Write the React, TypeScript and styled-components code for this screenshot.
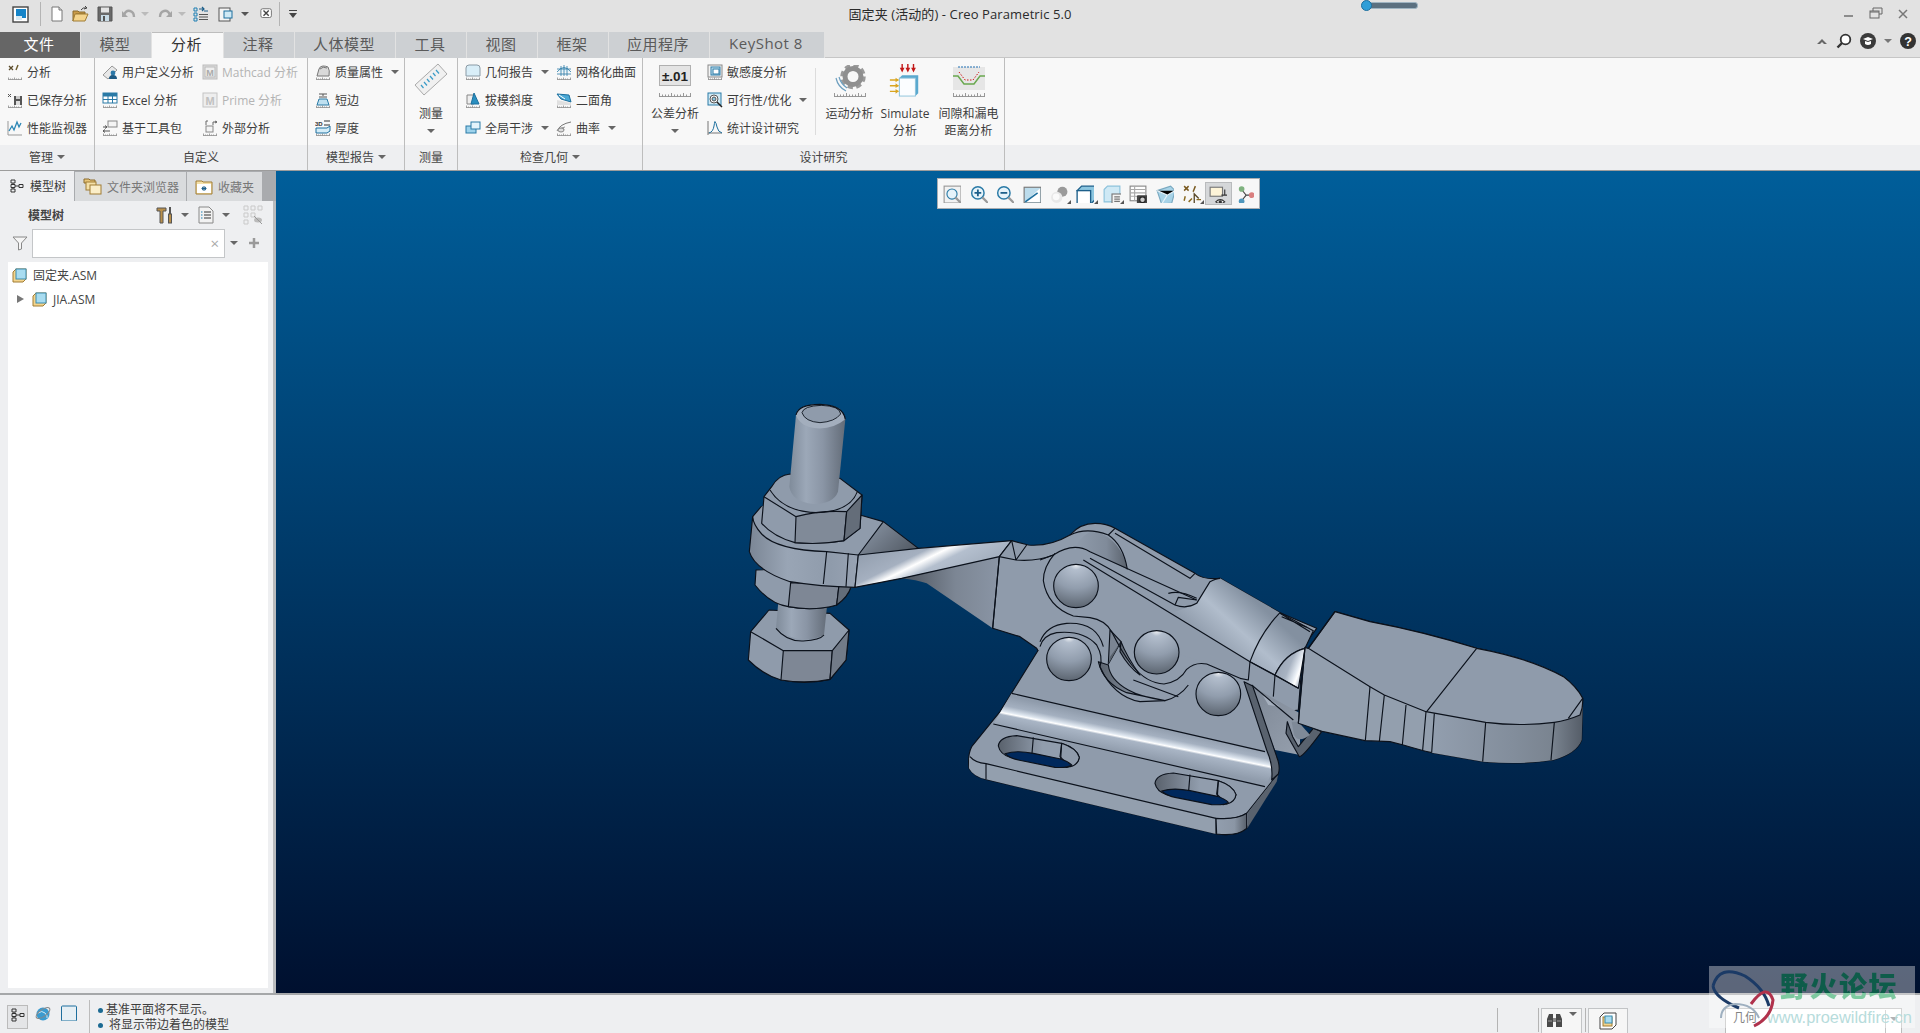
import React from "react";
import styled, { createGlobalStyle } from "styled-components";

const Global = createGlobalStyle`
  html, body { margin: 0; padding: 0; height: 100%; overflow: hidden; background: #eeeff1; }
  body { font-family: "Open Sans", "Noto Sans CJK SC", sans-serif; font-size: 12px; color: #3d3d3d; }
  #root { height: 1033px; }
`;

const Page = styled.div`
  width: 1920px; height: 1033px; display: flex; flex-direction: column; overflow: hidden; position: relative;
`;
const TitleRow = styled.div`
  height: 32px; background: #e2e2e2; display: grid; grid-template-columns: 1fr auto 1fr; align-items: center;
`;
const Quick = styled.div`display: flex; align-items: center; padding: 0 0 4px 12px; height: 32px; box-sizing: border-box;`;
const QBtn = styled.span<{ $m?: number }>`
  display: inline-flex; align-items: center; margin-left: ${p => p.$m ?? 0}px;
`;
const VSep = styled.span<{ $m?: number; $h?: number }>`
  width: 1px; height: ${p => p.$h ?? 24}px; background: #b4b4b4; margin-left: ${p => p.$m ?? 0}px; flex: none;
`;
const Caret = styled.span<{ $m?: number; $c?: string; $s?: number }>`
  display: inline-block; flex: none; width: 0; height: 0; margin-left: ${p => p.$m ?? 0}px;
  border-left: ${p => p.$s ?? 4}px solid transparent; border-right: ${p => p.$s ?? 4}px solid transparent;
  border-top: ${p => p.$s ?? 4}px solid ${p => p.$c ?? "#666"};
`;
const Title = styled.div`font-size: 13px; color: #2b2b2b; white-space: nowrap; letter-spacing: .1px; margin-bottom: 6px;`;
const TitleRight = styled.div`display: flex; align-items: center; justify-content: space-between; height: 32px; padding: 0 10px 0 290px;`;
const Zoomer = styled.div`
  width: 54px; height: 5px; border-radius: 3px; background: #5b7080; border: 1px solid #9fb4c2; position: relative; margin-top: -22px;
  &::before { content: ""; position: absolute; left: -2px; top: -3px; width: 9px; height: 9px; border-radius: 50%; background: #2f9ed8; border: 1px solid #1d6f9e; }
`;
const WinCtl = styled.div`display: flex; align-items: center; gap: 13px; margin-top: -4px;`;

const TabRow = styled.div`height: 26px; background: #e2e2e2; display: flex; align-items: stretch;`;
const Tab = styled.div<{ $w: number; $kind?: "file" | "active" }>`
  width: ${p => p.$w}px; margin-right: 1px; display: flex; align-items: center; justify-content: center; flex: none;
  font-size: 15px; letter-spacing: .5px; padding: 0 2px 4px 0;
  background: ${p => (p.$kind === "file" ? "#666666" : p.$kind === "active" ? "#f8f8f8" : "#cdd0d3")};
  color: ${p => (p.$kind === "file" ? "#fff" : p.$kind === "active" ? "#333" : "#5a5a5a")};
  border-top: ${p => (p.$kind === "active" ? "1px solid #bdbdbd" : "none")};
  box-sizing: border-box;
`;
const TabFill = styled.div`
  flex: 1; display: flex; align-items: center; justify-content: flex-end; gap: 8px; padding: 0 4px 8px 0; box-sizing: border-box;
  border-bottom: 1px solid #c6c6c6;
`;

const Ribbon = styled.div`display: flex; height: 113px; background: #f8f8f8; border-bottom: 1px solid #9c9c9c; box-sizing: border-box;`;
const Group = styled.div<{ $w?: number }>`
  ${p => (p.$w ? `width:${p.$w}px; flex:none; border-right:1px solid #bdbdbd; box-sizing:border-box;` : "flex:1;")}
  display: flex; flex-direction: column;
`;
const GroupBody = styled.div`height: 87px; display: flex; flex: none;`;
const GroupLabel = styled.div`
  flex: 1; background: #eeeff1; display: flex; align-items: center; justify-content: center; gap: 4px; font-size: 12px; color: #444; padding-bottom: 2px; box-sizing: border-box;
`;
const Col = styled.div<{ $w?: number; $p?: number }>`
  ${p => (p.$w ? `width:${p.$w}px;flex:none;` : "")} padding-left: ${p => p.$p ?? 7}px; box-sizing: border-box;
  display: grid; grid-template-rows: repeat(3, 28px);
`;
const Small = styled.div<{ $off?: boolean }>`
  display: flex; align-items: center; gap: 4px; white-space: nowrap; color: ${p => (p.$off ? "#b4b4b4" : "#3d3d3d")};
`;
const Big = styled.div<{ $w: number; $m?: number }>`
  width: ${p => p.$w}px; margin-left: ${p => p.$m ?? 0}px; flex: none; display: flex; flex-direction: column; align-items: center; padding-top: 5px;
  line-height: 17px; text-align: center; box-sizing: border-box;
`;
const BigIcon = styled.div`height: 34px; display: flex; align-items: flex-end; flex: none;`;
const BigLabel = styled.div`margin-top: 8px; white-space: nowrap;`;
const BigCaret = styled(Caret)`margin-top: 7px;`;
const RibbonSep = styled.div`width: 1px; height: 67px; background: #dcdcdc; margin-top: 10px; flex: none;`;

const Main = styled.div`display: flex; height: 822px; flex: none;`;
const Panel = styled.div`
  width: 276px; flex: none; display: flex; flex-direction: column; background: #eeeff1; border-right: 3px solid #b9bbbd; box-sizing: border-box;
`;
const PTabs = styled.div`display: flex; height: 30px; background: #a9abae; align-items: flex-end; margin-right: -3px; flex: none;`;
const PTab = styled.div<{ $w: number; $on?: boolean }>`
  width: ${p => p.$w}px; height: ${p => (p.$on ? 30 : 29)}px; flex: none; box-sizing: border-box;
  background: ${p => (p.$on ? "#eeeff1" : "#d9dbdd")}; color: ${p => (p.$on ? "#3a3a3a" : "#777")};
  border-right: 1px solid #a9abae; display: flex; align-items: center; padding-left: ${p => (p.$on ? 10 : 8)}px; gap: ${p => (p.$on ? 6 : 5)}px; white-space: nowrap;
`;
const PTool = styled.div`height: 27px; display: flex; align-items: center; padding-left: 28px; flex: none;`;
const PBold = styled.b`font-weight: 700; color: #444; width: 128px; font-size: 12px;`;
const PFilter = styled.div`height: 30px; display: flex; align-items: center; padding-left: 12px; flex: none;`;
const SearchBox = styled.div`
  width: 193px; height: 29px; margin-left: 4px; background: #fff; border: 1px solid #c4c6c8; box-sizing: border-box;
  display: flex; align-items: center; justify-content: flex-end; padding-right: 5px; color: #aaa; font-size: 15px;
`;
const Tree = styled.div`margin: 4px 5px 5px 8px; flex: 1; background: #fff; padding-top: 1px;`;
const TreeRow = styled.div<{ $in?: number }>`
  height: 24px; display: flex; align-items: center; gap: 6px; padding-left: ${p => p.$in ?? 4}px;
  font-size: 12px; color: #444;
`;
const Arrow = styled.span`
  width: 0; height: 0; border-top: 4.5px solid transparent; border-bottom: 4.5px solid transparent; border-left: 7px solid #777; margin-right: 2px;
`;

const Viewport = styled.div`
  flex: 1; position: relative; overflow: hidden; background: linear-gradient(180deg, #005e9a 0%, #00102f 100%);
`;
const ModelSvg = styled.svg`position: absolute; inset: 0; width: 100%; height: 100%;`;
const ViewBar = styled.div`
  position: absolute; left: 661px; top: 7px; width: 323px; height: 31px; box-sizing: border-box; background: #f7f7f7; border: 1px solid #a9adb1;
  display: flex; align-items: center; padding-left: 1px;
`;
const ViewBtn = styled.div<{ $on?: boolean }>`
  width: 26.6px; height: 23px; flex: none; display: flex; align-items: center; justify-content: center; box-sizing: border-box; position: relative;
  ${p => (p.$on ? "background:#d5d7d9;border:1px solid #b9bbbd;" : "")}
`;
const Corner = styled.i`
  position: absolute; right: 1px; bottom: 1px; width: 0; height: 0; border-left: 4px solid transparent; border-bottom: 4px solid #555;
`;

const Status = styled.div`
  height: 40px; flex: none; background: #eeeff1; border-top: 2px solid #a5a7a9; box-sizing: border-box; display: flex; position: relative; overflow: hidden;
`;
const StatusIcons = styled.div`display: flex; align-items: flex-start; padding: 10px 0 0 7px; width: 89px; box-sizing: border-box; gap: 7px;`;
const TreeToggle = styled.div`width: 21px; height: 24px; border: 1px solid #bbb; background: #e4e5e7; box-sizing: border-box; display: flex; justify-content: center; padding-top: 2px; flex: none;`;
const Msgs = styled.div`margin-top: 5px; height: 33px; border-left: 1px solid #bcbcbc; padding: 2px 0 0 8px; flex: none; width: 1408px; box-sizing: border-box;`;
const Msg = styled.div<{ $in?: number; $lh?: number }>`
  display: flex; align-items: center; gap: ${p => p.$in ?? 3}px; white-space: nowrap; line-height: ${p => p.$lh ?? 16}px; height: ${p => p.$lh ?? 16}px;
`;
const Dot = styled.i`width: 5px; height: 5px; border-radius: 50%; background: #1b6a93; flex: none;`;
const StatRight = styled.div`display: flex; align-items: flex-start; padding-top: 13px; flex: none;`;
const SBtn = styled.div<{ $w: number; $m?: number }>`
  width: ${p => p.$w}px; margin-left: ${p => p.$m ?? 0}px; height: 30px; border: 1px solid #c2c4c6; background: #f6f6f6; box-sizing: border-box;
  display: flex; align-items: flex-start; justify-content: center; padding-top: 3px; gap: 4px; flex: none;
`;
const Combo = styled.div`
  width: 177px; height: 30px; margin-left: 97px; background: #fff; border: 1px solid #bcbcbc; box-sizing: border-box; padding: 1px 0 0 7px; display: flex; justify-content: space-between; flex: none; line-height: 16px;
`;
const ComboArrow = styled.div`width: 15px; border-left: 1px solid #c4c4c4; display: flex; justify-content: center; padding-top: 7px;`;
const Watermark = styled.div`
  position: absolute; left: 1709px; top: 966px; width: 206px; height: 62px; background: rgba(255, 255, 255, .36);
  display: flex; flex-direction: column; padding: 4px 0 0 71px; box-sizing: border-box;
`;
const WmTitle = styled.div`
  font-size: 28px; font-weight: 900; line-height: 30px; letter-spacing: 1.5px; font-family: "Noto Sans CJK SC", sans-serif; white-space: nowrap;
  background: linear-gradient(180deg, #0e5c4a 0, #0e5c4a 23px, #7ec9a0 23px, #7ec9a0 30px);
  -webkit-background-clip: text; background-clip: text; color: transparent;
`;
const WmUrl = styled.div`font-size: 16.4px; line-height: 20px; color: #b7dcdc; margin: 7px 0 0 -13px; font-family: "Liberation Sans", sans-serif; white-space: nowrap;`;
const WmLogo = styled.svg`position: absolute; left: 0; top: 2px; width: 72px; height: 60px;`;

const Ico = styled.svg<{ $s?: number }>`
  width: ${p => p.$s ?? 16}px; height: ${p => p.$s ?? 16}px; flex: none; display: block;
`;
const I: React.FC<{ s?: number; v?: number; children: React.ReactNode }> = ({ s = 16, v = 16, children }) => (
  <Ico $s={s} viewBox={`0 0 ${v} ${v}`}>{children}</Ico>
);
const Ruler = () => (
  <path d="M1 15.5h14M1.5 13.5v2M3.5 14.5v1M5.5 14.5v1M7.5 13.5v2M9.5 14.5v1M11.5 14.5v1M14.5 13.5v2" stroke="#8c8c8c" strokeWidth=".8" fill="none" />
);

const ic = {
  analysis: <I><path d="M2 2l4 4M6 2L2 6" stroke="#5a4a2a" strokeWidth="1.3" /><path d="M11 1l-2 5" stroke="#6b5a2c" strokeWidth="1.4" /><Ruler /></I>,
  saved: <I><path d="M1 2l3 3M4 2L1 5" stroke="#555" /><rect x="7" y="4" width="8" height="9" fill="#555" /><rect x="9" y="9" width="4" height="4" fill="#ddd" /><rect x="9" y="4" width="4" height="3" fill="#ccc" /><Ruler /></I>,
  monitor: <I><path d="M1 1v14h14" stroke="#999" fill="none" /><path d="M2 11l3-5 2 4 3-8 2 5 2-4" stroke="#2a86b5" strokeWidth="1.3" fill="none" /></I>,
  user: <I><path d="M1 11L10 2l5 4-9 9z" fill="#e8e8e8" stroke="#999" /><circle cx="11" cy="9" r="2.4" fill="#2b78a8" /><path d="M7 15q0-4 4-4t4 4z" fill="#1d5a84" /></I>,
  excel: <I><rect x="1" y="1" width="14" height="10" fill="#fff" stroke="#2a7aa6" /><path d="M1 4h14M1 7.5h14M6 4v7M10.5 4v7" stroke="#2a7aa6" /><rect x="1" y="1" width="14" height="3" fill="#2a7aa6" /><Ruler /></I>,
  mathcad: <I><rect x="1" y="1" width="14" height="14" fill="#ddd" stroke="#bbb" /><rect x="3" y="3" width="10" height="10" fill="#eee" stroke="#bbb" /><text x="8" y="12" fontSize="9" fontWeight="700" textAnchor="middle" fill="#aaa" fontFamily="Liberation Sans">M</text></I>,
  prime: <I><rect x="1" y="1" width="14" height="14" fill="#eee" stroke="#c4c4c4" /><text x="8" y="12.5" fontSize="11" fontWeight="700" textAnchor="middle" fill="#c0c0c0" fontFamily="Liberation Sans">M</text></I>,
  toolkit: <I><rect x="6" y="1" width="9" height="6" fill="#f4f4f4" stroke="#888" /><path d="M1 7h4M3 5.5L5 7 3 8.500M1 11h7M3 9.500L1 11l2 1.500" stroke="#555" fill="none" /><Ruler /></I>,
  external: <I><rect x="4" y="6" width="7" height="6" fill="#f4f4f4" stroke="#888" /><path d="M4 5V1h2M11 5V2h4M13 1l2 1-2 1" stroke="#666" fill="none" /><Ruler /></I>,
  mass: <I><path d="M2 12l2-7q1-3 4-3 3 0 5 1 2 3 1 9z" fill="#d9d9d9" stroke="#777" /><path d="M5 5q3-3 7-1" stroke="#777" fill="none" /><Ruler /></I>,
  edge: <I><path d="M4 2h8M8 2v2M4 5h8" stroke="#555" /><path d="M4 7h8l2 6H2z" fill="#bfe0f0" stroke="#2a7aa6" /><Ruler /></I>,
  thick: <I><text x="0" y="6" fontSize="6" fontWeight="700" fill="#333" fontFamily="Liberation Sans">3D</text><path d="M9 1h6M9 5h6" stroke="#333" /><path d="M1 8h11l3-2v5l-3 2H1z" fill="#d4ecf7" stroke="#1d6f9e" /><Ruler /></I>,
  geom: <I><path d="M1 12V4q0-3 3-3h8q3 0 3 3v8z" fill="#d9eef8" stroke="#8a9aa5" /><Ruler /></I>,
  draft: <I><path d="M2 3h7v9H2z" fill="#eee" stroke="#888" /><path d="M9 1l5 11H6z" fill="#2a8fc0" stroke="#1d6f9e" /><Ruler /></I>,
  clash: <I><rect x="1" y="6" width="10" height="7" fill="#9ed3ec" stroke="#2a7aa6" /><rect x="6" y="2" width="9" height="7" fill="#e3f3fb" stroke="#2a7aa6" /></I>,
  mesh: <I><path d="M1 8q7-9 14 0M1 5h14M1 10h14M5 2v10M8 1v11M11 2v10" stroke="#2a7aa6" fill="#e6f4fb" strokeWidth=".8" /><Ruler /></I>,
  dihedral: <I><path d="M1 2l12 1 2 7L5 7z" fill="#4aa9d6" stroke="#1d6f9e" /><path d="M3 3l6 4" stroke="#fff" /><path d="M1 8l14 3v2H1z" fill="#e0e0e0" /><Ruler /></I>,
  curv: <I><path d="M1 11q3-7 14-9" stroke="#777" fill="none" /><path d="M1 11q2-3 8-4M4 8l2 3M7 7l1 3" stroke="#999" fill="none" /><ellipse cx="5" cy="10" rx="3" ry="2" fill="#ddd" stroke="#888" /><Ruler /></I>,
  sens: <I><rect x="1" y="1" width="14" height="12" fill="#f4f4f4" stroke="#888" /><rect x="4" y="3" width="9" height="8" fill="#cfe9f5" stroke="#2a7aa6" /><rect x="6" y="5" width="6" height="5" fill="#fff" stroke="#2a7aa6" /><Ruler /></I>,
  feas: <I><rect x="1" y="1" width="13" height="12" fill="#cfe9f5" stroke="#2a7aa6" /><circle cx="7" cy="7" r="4" fill="#fff" stroke="#555" /><circle cx="7" cy="7" r="2" fill="#88c5e0" stroke="#555" /><path d="M10 10l5 5" stroke="#222" strokeWidth="1.5" /></I>,
  stat: <I><path d="M1 1v14M1 13h14" stroke="#777" /><path d="M2 13Q6 12 7 6t1-4q1 0 2 5t5 6" stroke="#1d6f9e" fill="none" /></I>,
};

const RulerBig = () => (
  <path d="M0 31.500h32M.5 28v3.500M3.500 29.500v2M6.500 29.500v2M9.500 29.500v2M12.500 28v3.500M15.500 29.500v2M18.500 29.500v2M21.500 29.500v2M24.500 28v3.500M27.500 29.500v2M31.500 28v3.500" stroke="#8c8c8c" strokeWidth=".9" fill="none" />
);
const bigs = {
  measure: (
    <I s={34} v={34}>
      <path d="M1 22L24 1l9 10L10 32z" fill="#f0f0f0" stroke="#aaa" />
      <path d="M7 22l2.500 3M10 19l3 3.500M13 16l2.500 3M16 13l3 3.500M19 10l2.500 3M22 7l3 3.500" stroke="#3a9cc8" strokeWidth="1.2" />
    </I>
  ),
  tol: (
    <I s={32} v={32}>
      <rect x=".5" y=".5" width="31" height="20" fill="#e4e4e4" stroke="#b0b0b0" />
      <text x="16" y="15.500" fontSize="13.500" fontWeight="700" textAnchor="middle" fill="#222" fontFamily="Liberation Sans">±.01</text>
      <RulerBig />
    </I>
  ),
  motion: (
    <I s={32} v={32}>
      <circle cx="19" cy="11.500" r="10.500" fill="none" stroke="#9a9a9a" strokeWidth="4.500" strokeDasharray="5 3.250" />
      <circle cx="19" cy="11.500" r="8" fill="none" stroke="#8f8f8f" strokeWidth="5" />
      <path d="M2 13q2 9 10 13M5 12q2 7 8 11" stroke="#6d9fbf" strokeWidth="1.2" fill="none" />
      <RulerBig />
    </I>
  ),
  sim: (
    <I s={34} v={36}>
      <path d="M15 6V1M21 6V1M27 6V1" stroke="#c21818" strokeWidth="1.5" />
      <path d="M12.500 5l2.500 5 2.500-5zM18.500 5l2.500 5 2.500-5zM24.500 5l2.500 5 2.500-5z" fill="#c21818" />
      <path d="M12 16l3-3h17v19l-3 3H12z" fill="#5aa9cf" />
      <rect x="12" y="16" width="17" height="19" fill="#fbfdff" stroke="#8cc2dc" />
      <path d="M2 18h9M2 24h9M2 30h9" stroke="#d9a520" strokeWidth="1.500" />
      <path d="M8 15.500l3.500 2.500-3.500 2.500zM8 21.500l3.500 2.500-3.500 2.500zM8 27.500l3.500 2.500-3.500 2.500z" fill="#d9a520" />
    </I>
  ),
  clear: (
    <I s={32} v={32}>
      <rect y="2" width="32" height="23" fill="#e6e6e6" />
      <path d="M0 11h5l6 8h10l6-8h5" stroke="#6aa84f" strokeWidth="1.500" fill="none" />
      <path d="M5 2h22" stroke="#1f6fb2" strokeDasharray="2 1" />
      <path d="M6 7l6 8h8l6-8" stroke="#d01818" strokeDasharray="1.500 1.500" fill="none" />
      <RulerBig />
    </I>
  ),
};

const V = 18;
const viewIcons = [
  <I s={V}><rect x="1" y="1" width="15" height="15" fill="#f2f2f2" stroke="#999" /><circle cx="8" cy="8" r="4.500" fill="#e6f3fa" stroke="#2a7aa6" /><path d="M11 11l5 5" stroke="#999" strokeWidth="2" /></I>,
  <I s={V}><circle cx="7" cy="7" r="5.500" fill="#e6f3fa" stroke="#2a7aa6" strokeWidth="1.300" /><path d="M4 7h6M7 4v6" stroke="#1d5f8a" strokeWidth="1.600" /><path d="M11 11l5 5" stroke="#999" strokeWidth="2" /></I>,
  <I s={V}><circle cx="7" cy="7" r="5.500" fill="#e6f3fa" stroke="#2a7aa6" strokeWidth="1.300" /><path d="M4 7h6" stroke="#1d5f8a" strokeWidth="1.600" /><path d="M11 11l5 5" stroke="#999" strokeWidth="2" /></I>,
  <I s={V}><rect x="1" y="2" width="15" height="14" fill="#bcdcec" stroke="#777" /><path d="M2 15L15 3v12z" fill="#fff" /><path d="M2 15l11-8" stroke="#1d6f9e" strokeWidth="1.500" /></I>,
  <I s={V}><circle cx="11" cy="6" r="4.500" fill="#9a9a9a" /><circle cx="6" cy="11" r="5" fill="#e8e8e8" /><circle cx="5.500" cy="10.500" r="3" fill="#fafafa" /></I>,
  <I s={V}><path d="M1 5l4-4h12v12l-4 4z" fill="#8cc6e0" stroke="#1d5f8a" strokeWidth="1.200" /><rect x="1" y="5" width="12" height="12" fill="#fff" stroke="#1d5f8a" strokeWidth="1.200" /></I>,
  <I s={V}><path d="M1 4l3-3h11v11l-3 3H1z" fill="#cfe9f5" stroke="#8cc2dc" /><rect x="8" y="8" width="9" height="9" fill="#f4f4f4" stroke="#777" /><path d="M10 10.500h5M10 12.500h5M10 14.500h5" stroke="#777" /></I>,
  <I s={V}><rect x="1" y="1" width="14" height="13" fill="#fff" stroke="#888" /><path d="M1 4h14M1 7h14M1 10h14M5 1v13" stroke="#aaa" /><rect x="7" y="9" width="10" height="8" rx="1" fill="#444" /><circle cx="12" cy="13" r="2.500" fill="#ccc" stroke="#222" /></I>,
  <I s={V}><path d="M1 5l12-4 4 4-3 11-9 1z" fill="#a7d3e8" stroke="#7aa9c0" /><path d="M1 5l9 4 7-4M10 9l-5 8" stroke="#e4f2f9" /></I>,
  <I s={V}><path d="M1 1l4 4M5 1L1 5" stroke="#7a5a20" strokeWidth="1.300" /><path d="M11 1l-2 5" stroke="#7a5a20" strokeWidth="1.300" /><path d="M10 16V8l4 4" stroke="#5a4a2a" fill="none" strokeWidth="1.200" /><path d="M5 15l3-3M2 10l-1 4M12 13h5" stroke="#8a6a20" strokeWidth="1.300" /></I>,
  <I s={V}><rect x="1" y="2" width="11" height="8" fill="#fdf4d8" stroke="#777" /><path d="M14 4v5M11 9h6" stroke="#333" /><path d="M6 15q4-4 8 0q-4 3-8 0z" fill="#fff" stroke="#333" /><circle cx="10" cy="15" r="1.500" fill="#333" /></I>,
  <I s={V}><path d="M5 4l4 5-4 5M9 9h5" stroke="#444" fill="none" /><circle cx="5" cy="3.500" r="2.500" fill="#7fb27f" /><circle cx="14" cy="9" r="2.500" fill="#d97f7f" /><circle cx="5" cy="14.500" r="2.500" fill="#4f97bd" /></I>,
];

const Smalls: React.FC<{ items: [React.ReactNode, string, boolean?, boolean?][] ; p?: number; w?: number}> = ({ items, p, w }) => (
  <Col $p={p} $w={w}>
    {items.map(([icon, text, caret, off]) => (
      <Small key={text} $off={off}>
        {icon}
        <span>{text}</span>
        {caret ? <Caret $m={4} /> : null}
      </Small>
    ))}
  </Col>
);

const tabs: [string, number, ("file" | "active")?][] = [
  ["文件", 80, "file"], ["模型", 70], ["分析", 71, "active"], ["注释", 70], ["人体模型", 100], ["工具", 70], ["视图", 70], ["框架", 70], ["应用程序", 100], ["KeyShot 8", 114],
];

const E = "#0b111b";
const M = "#8f9bab";
const W = 3.4;

const Boss: React.FC<{ cx: number; cy: number }> = ({ cx, cy }) => (
  <ellipse cx={cx} cy={cy} rx={67} ry={65} fill="url(#boss)" stroke={E} strokeWidth={W} />
);
const Slot: React.FC<{ dx?: number; dy?: number }> = ({ dx = 0, dy = 0 }) => (
  <g transform={`translate(${dx},${dy})`}>
    <path d="M170,257 Q118,260 115,288 Q120,312 150,322 L320,352 Q355,345 358,322 Q350,295 305,280Z" fill="url(#slotWall)" stroke={E} strokeWidth={W} />
    <path d="M305,280 Q350,295 358,322 Q355,345 330,350 L300,320Z" fill={M} stroke={E} strokeWidth={W} />
    <path d="M135,311 Q170,300 220,310 L302,327 Q325,335 335,345 Q325,354 285,352 L175,330 Q150,325 135,311Z" fill="#00285c" />
    <path d="M220,262 L216,310M305,280 L302,328" stroke={E} strokeWidth={W} fill="none" />
  </g>
);

const Model = () => (
  <ModelSvg viewBox="276 171 1644 822">
    <defs>
      <linearGradient id="cyl" x1="0" x2="1" y1="0" y2="0">
        <stop offset="0" stopColor="#7f8b9a" /><stop offset=".3" stopColor="#9ca8b8" /><stop offset=".6" stopColor="#8a95a5" /><stop offset="1" stopColor="#636c78" />
      </linearGradient>
      <linearGradient id="collar" x1="0" x2="1" y1="0" y2="0">
        <stop offset="0" stopColor="#7b8695" /><stop offset=".35" stopColor="#99a5b5" /><stop offset=".75" stopColor="#8f9bab" /><stop offset="1" stopColor="#98a3b3" />
      </linearGradient>
      <linearGradient id="twist" x1="0" x2="1" y1=".2" y2=".8">
        <stop offset="0" stopColor="#8f9bab" /><stop offset=".33" stopColor="#a5b0c0" /><stop offset=".42" stopColor="#ffffff" /><stop offset=".52" stopColor="#b4bfce" /><stop offset="1" stopColor="#8f9bab" />
      </linearGradient>
      <linearGradient id="under" x1="0" x2="1" y1="0" y2="0">
        <stop offset="0" stopColor="#4c535d" /><stop offset=".55" stopColor="#7c8694" /><stop offset="1" stopColor="#8a95a5" />
      </linearGradient>
      <linearGradient id="wedge" x1="0" x2="1" y1="0" y2=".6">
        <stop offset="0" stopColor="#8f9bab" /><stop offset="1" stopColor="#565e69" />
      </linearGradient>
      <linearGradient id="dome" x1="0" x2="1" y1="0" y2="0">
        <stop offset="0" stopColor="#8f9bab" /><stop offset=".6" stopColor="#808b9a" /><stop offset="1" stopColor="#59616c" />
      </linearGradient>
      <radialGradient id="boss" cx=".5" cy="-.02" r="1.05">
        <stop offset="0" stopColor="#ffffff" /><stop offset=".14" stopColor="#b3becd" /><stop offset=".55" stopColor="#919dad" /><stop offset="1" stopColor="#59626d" />
      </radialGradient>
      <linearGradient id="lever" gradientUnits="userSpaceOnUse" x1="630" y1="258" x2="500" y2="400">
        <stop offset="0" stopColor="#8390a0" /><stop offset=".5" stopColor="#b1bdcc" /><stop offset="1" stopColor="#8f9bab" />
      </linearGradient>
      <linearGradient id="sheen" gradientUnits="userSpaceOnUse" x1="700" y1="430" x2="800" y2="470">
        <stop offset="0" stopColor="#8f9bab" /><stop offset=".55" stopColor="#a8b3c2" /><stop offset=".78" stopColor="#e6ecf3" /><stop offset=".86" stopColor="#ffffff" /><stop offset="1" stopColor="#b0bbca" />
      </linearGradient>
      <linearGradient id="bend" gradientUnits="userSpaceOnUse" x1="510" y1="212" x2="490" y2="311">
        <stop offset="0" stopColor="#8f9bab" /><stop offset=".3" stopColor="#a4b0c0" /><stop offset=".47" stopColor="#dfe7f0" /><stop offset=".52" stopColor="#ffffff" /><stop offset=".58" stopColor="#a9b5c5" /><stop offset="1" stopColor="#8f9bab" />
      </linearGradient>
      <linearGradient id="slotWall" x1="0" x2=".55" y1="0" y2="0">
        <stop offset="0" stopColor="#59616c" /><stop offset="1" stopColor="#919dad" />
      </linearGradient>
      <linearGradient id="corner" x1="0" x2="1" y1="0" y2="0">
        <stop offset="0" stopColor="#929eae" /><stop offset=".6" stopColor="#8b96a5" /><stop offset="1" stopColor="#59616c" />
      </linearGradient>
      <linearGradient id="hSide" gradientUnits="userSpaceOnUse" x1="430" y1="0" x2="875" y2="0">
        <stop offset="0" stopColor="#929eae" /><stop offset=".55" stopColor="#828d9b" /><stop offset=".8" stopColor="#7a8490" /><stop offset="1" stopColor="#565e69" />
      </linearGradient>
      <linearGradient id="rear" x1="0" x2="1" y1="0" y2="1">
        <stop offset="0" stopColor="#7c8694" /><stop offset="1" stopColor="#959fad" />
      </linearGradient>
      <linearGradient id="groove" x1="0" x2="1" y1="0" y2="0">
        <stop offset="0" stopColor="#5a626d" /><stop offset=".5" stopColor="#7d8795" /><stop offset="1" stopColor="#a3aebd" />
      </linearGradient>
    </defs>

    <g transform="translate(720,380) scale(.33333)" stroke={E} strokeWidth={W} strokeLinejoin="round">
      <path fill={M} d="M147,690 L92,755 L85,840 Q130,885 183,900 Q260,915 330,898 L378,840 L387,750 L330,700Z" />
      <path fill="#7e8795" d="M190,812 L337,812 L330,898 Q260,912 183,900Z" />
      <path fill="#727b88" d="M337,812 L387,750 L378,840 L330,898Z" />
      <path fill="none" d="M92,755 L190,812" />
      <path fill="url(#cyl)" stroke="none" d="M175,665 L168,745 Q240,800 312,765 L322,670Z" />
      <path fill="none" d="M168,745 Q200,785 250,783 Q300,780 312,765" />
      <path fill={M} d="M108,570 L105,615 Q150,672 205,680 Q280,695 350,675 Q385,650 393,620 L380,560Z" />
      <path fill="#7e8795" d="M212,608 L205,680 Q280,695 350,675 L357,615Z" />
      <path fill="#646d79" d="M357,615 L393,620 Q385,650 350,675Z" />
      <path fill="url(#under)" stroke="none" d="M545,595 L838,530 L818,745 L620,610 Q590,600 545,595Z" />
      <path fill={M} stroke="none" d="M125,378 L98,410 L96,450 Q120,510 320,530 L415,530 L490,425 L420,405 L300,380Z" />
      <path fill="url(#wedge)" stroke="none" d="M490,425 L595,505 L415,525Z" />
      <path fill="none" d="M420,405 L490,425 L595,505M490,425 L415,525" />
      <path fill="url(#collar)" d="M98,410 L88,515 Q105,570 210,605 Q300,620 405,622 L415,525 L320,515 Q170,510 125,462 Q100,435 98,410Z" />
      <path fill="none" d="M125,378 L98,410M320,515 L310,612M385,520 L378,620" />
      <path fill={M} d="M132,350 L155,320 Q175,285 210,282 L360,295 L426,345 L420,445 L372,482 Q300,495 225,488 Q160,470 125,430Z" />
      <path fill="#808a98" d="M228,410 Q300,390 380,395 L372,482 Q300,495 225,488Z" />
      <path fill="#646d79" d="M380,395 L426,345 L420,445 L372,482Z" />
      <path fill="none" d="M132,350 L228,410 M150,330 Q190,395 290,398 Q390,395 412,335" />
      <path fill="url(#cyl)" stroke="none" d="M228,105 Q235,73 300,73 Q370,75 376,118 L354,335 Q340,372 280,372 Q215,365 208,320Z" />
      <path fill="#a3aebd" d="M228,105 Q235,73 300,73 Q370,75 376,118 Q340,148 290,145 Q240,140 228,105Z" stroke="none" />
      <path fill="#8f9bab" strokeWidth="2.600" d="M246,98 Q250,78 304,76 Q360,78 362,102 Q345,125 300,128 Q255,125 246,98Z" />
      <path fill="none" d="M228,105 Q235,73 300,73 Q370,75 376,118" />
      <path fill="url(#twist)" d="M415,525 L595,505 L875,482 L838,530 L545,595 L405,622Z" />
    </g>

    <g transform="translate(1040,510) scale(.33333)" stroke={E} strokeWidth={W} strokeLinejoin="round">
      <path fill={M} d="M-142,355 L-122,140 L-85,92 L-35,105 Q30,110 90,75 Q120,40 165,40 Q200,40 225,55 L465,190 Q490,210 540,205 L720,308 L830,355 L790,410 L775,600 L500,640 L100,620 L-10,415 L-60,380Z" />
      <path fill="none" d="M-122,140 L-142,355M-122,140 L-72,150 Q-10,155 40,135M-85,92 L-72,150M-40,105 L-72,150" />
      <path fill="url(#dome)" stroke="none" d="M165,62 Q245,90 262,178 L150,125 Q130,105 105,112 Q125,70 165,62Z" />
      <path fill="url(#lever)" stroke="none" d="M540,205 L720,308 Q660,370 630,455 L390,310 Q440,295 470,280 L510,215Z" />
      <path fill="url(#lever)" d="M720,308 L820,362 L795,415 Q735,430 705,495 L630,455 Q660,370 720,308Z" />
      <path fill="url(#sheen)" d="M795,415 Q735,430 705,495 L775,535Z" />
    </g>

    <g transform="translate(960,650) scale(.33333)" stroke={E} strokeWidth={W} strokeLinejoin="round">
      <path fill="url(#rear)" stroke="none" d="M860,100 L1020,190 L1020,315 L945,300Z" />
      <path fill="#a5afbd" stroke="none" d="M905,130 L960,170 L925,165Z" />
      <path fill="none" d="M875,105 L1000,210" />
    </g>
    <g transform="translate(1290,590) scale(.33333)" stroke={E} strokeWidth={W} strokeLinejoin="round">
      <path fill="#59626e" d="M-8,395 L-12,430 L28,500 Q40,500 95,425 L70,415 L25,470 L8,440Z" />
      <path fill="#7f8a98" stroke="none" d="M5,395 L12,435 Q25,460 60,435 L25,395Z" />
    </g>

    <g transform="translate(960,650) scale(.33333)" stroke={E} strokeWidth={W} strokeLinejoin="round">
      <path fill={M} d="M235,0 L120,185 L35,290 Q22,315 27,355 Q40,380 78,388 L770,552 Q830,560 860,535 L955,370 Q955,340 930,290 L860,110 L830,70 L500,-40 L300,-40Z" stroke="none" />
      <path fill="none" d="M235,0 L120,185 L35,290 Q22,315 27,355 Q40,380 78,388 L770,552 Q830,560 860,535 L955,370" />
      <path fill="url(#bend)" stroke="none" d="M155,130 L915,305 L945,350 L915,410 L100,222Z" />
      <path fill="none" d="M155,130 L915,305M100,222 L915,410" />
      <path fill="#939fae" stroke="none" d="M27,322 Q45,340 78,342 L768,505 L768,552 L78,388 Q40,380 27,355Z" />
      <path fill="none" d="M30,320 Q45,338 78,341 L768,505 Q830,510 860,490 L955,370M78,341 V388M768,505 V552" />
      <path fill="url(#corner)" d="M768,505 Q830,510 860,490 L860,535 Q830,560 770,552Z" />
      <path fill="#59626e" d="M862,490 L955,372 L950,395 L862,535Z" stroke="none" />
      <Slot />
      <Slot dx={470} dy={112} />
      <path fill="#59626e" d="M852,95 L878,108 L950,320 Q962,350 955,372 L935,390 Q940,345 920,300Z" />
    </g>

    <g transform="translate(1040,510) scale(.33333)" stroke={E} strokeWidth={W} strokeLinejoin="round" fill="none">
      <path fill="#7b8593" d="M210,360 L243,395 L205,462Z" />
      <path fill="#59626d" stroke="none" d="M205,462 L243,395 L210,440Z" />
      <path fill="url(#groove)" d="M175,455 Q190,520 260,548 L375,572 Q300,560 265,540 Q210,510 205,465Z" />
      <path fill="url(#groove)" d="M243,395 Q260,440 300,495 Q265,470 240,425Z" />
      <path d="M45,130 Q10,170 10,212 Q22,290 100,318 L150,323 Q195,330 215,365 Q245,425 275,465 Q320,520 372,522 Q420,515 440,478 Q465,455 500,462 L600,505" />
      <path d="M0,410 Q10,375 50,368 Q130,360 170,405 Q190,440 180,470 Q220,560 300,575 L375,572 Q420,560 445,525" />
      <path d="M0,395 Q20,345 80,340 Q170,335 190,410" />
      <path d="M130,150 L630,455 L775,535" />
      <path d="M0,150 L40,135 Q100,95 150,125 L470,270" />
      <path d="M150,145 L405,285 Q440,298 470,280 L510,215 Q530,205 540,205" />
      <path d="M405,285 L415,262 L470,270M385,250 Q420,240 470,265" />
      <path d="M225,70 L450,205 L465,190M90,75 Q140,50 205,75 L225,55" />
      <path d="M205,75 Q250,105 262,178" />
      <path d="M630,455 L625,510 L600,505M705,495 L700,560M720,310 L810,365M725,320 L800,352" />
      <path d="M280,510 L415,560" />
      <Boss cx={108} cy={228} />
      <Boss cx={87} cy={447} />
      <Boss cx={350} cy={427} />
      <Boss cx={535} cy={552} />
    </g>

    <g transform="translate(1290,590) scale(.33333)" stroke={E} strokeWidth={W} strokeLinejoin="round">
      <path fill="#939fae" d="M135,65 L240,95 Q400,125 560,175 Q720,205 820,260 Q860,290 878,325 L875,450 Q860,490 790,510 Q700,525 580,515 L425,488 Q390,480 340,465 L300,455 L225,452 L100,425 L25,400 L45,172 L55,175Z" />
      <path fill="url(#hSide)" stroke="none" d="M433,370 L587,397 Q700,410 835,385 L878,350 L875,450 Q860,490 790,510 Q700,525 580,515 L425,488Z" />
      <path fill={M} d="M55,175 L135,65 L240,95 Q400,125 560,175 Q720,205 820,260 Q860,290 878,325 Q880,350 870,375 Q830,392 793,397 Q690,410 587,397 L408,365 L283,315 L240,290Z" />
      <path fill="none" d="M135,65 L55,175M560,175 L410,365M878,325 L835,385M240,290 L226,452M283,315 L268,455M348,345 L337,465M408,365 L398,480M433,370 L425,488M587,397 L578,515M793,397 L783,510M45,172 L33,300 L25,400" />
    </g>
  </ModelSvg>
);

export default function App() {
  return (
    <>
      <Global />
      <Page>
        <TitleRow>
          <Quick>
            <I s={17} v={17}><rect x="1" y="1" width="15" height="15" fill="#fff" stroke="#444" strokeWidth="1.400" /><rect x="4" y="3" width="10" height="9" fill="#1584c8" /><rect x="4" y="10" width="6" height="4" fill="#d6e8f2" /></I>
            <VSep $m={11} />
            <QBtn $m={8}><I s={16}><path d="M3 1h7l3 3v11H3z" fill="#fff" stroke="#777" /><path d="M10 1v3h3" fill="#ddd" stroke="#777" /></I></QBtn>
            <QBtn $m={7}><I s={17} v={17}><path d="M1 5h5l1 1h6v2H4l-3 7z" fill="#c99b4a" stroke="#8a6a2c" /><path d="M3 8h13l-3 7H1z" fill="#f4d48c" stroke="#a07c34" /><path d="M9 4q2-3 5-2M13 0l2 2-3 1" stroke="#444" fill="none" /></I></QBtn>
            <QBtn $m={8}><I s={16}><path d="M1 1h14v14H1z" fill="#6a6a6a" stroke="#555" /><rect x="4" y="1.500" width="8" height="5" fill="#e4e4e4" /><rect x="4" y="9" width="8" height="6" fill="#c8dbe6" /><rect x="6" y="10" width="2" height="5" fill="#555" /></I></QBtn>
            <QBtn $m={8}><I s={16}><path d="M3 9q2-5 6-4t4 6" stroke="#a5a5a5" strokeWidth="2.400" fill="none" /><path d="M1 5v6h6z" fill="#a5a5a5" /></I></QBtn>
            <Caret $m={4} $c="#bbb" />
            <QBtn $m={8}><I s={16}><path d="M13 9q-2-5-6-4t-4 6" stroke="#a5a5a5" strokeWidth="2.400" fill="none" /><path d="M15 5v6H9z" fill="#a5a5a5" /></I></QBtn>
            <Caret $m={5} $c="#bbb" />
            <QBtn $m={7}><I s={16}><path d="M1 2h3v3H1zM1 7h3v3H1zM1 12h3v3H1z" fill="none" stroke="#1d7fb3" /><path d="M6 8.500h9M6 11h9M6 13.500h9" stroke="#555" /><path d="M6 3h5M9 1l2 2-2 2" stroke="#1d5f8a" fill="none" strokeWidth="1.200" /><path d="M15 5h-4" stroke="#1d5f8a" /></I></QBtn>
            <QBtn $m={9}><I s={17} v={17}><rect x="1" y="2" width="11" height="13" fill="#f4f4f4" stroke="#555" /><rect x="6" y="5" width="8" height="7" fill="#cfe9f5" stroke="#1d6f9e" /></I></QBtn>
            <Caret $m={6} $c="#555" />
            <QBtn $m={11}><I s={14}><rect x="1" y="2" width="12" height="10" rx="2" fill="#fff" stroke="#666" /><path d="M4 4l6 6M10 4l-6 6" stroke="#444" strokeWidth="1.600" /></I></QBtn>
            <VSep $m={5} />
            <QBtn $m={8}><I s={10} v={10}><path d="M1 1h8v1H1z" fill="#444" /><path d="M1 4h8L5 9z" fill="#444" /></I></QBtn>
          </Quick>
          <Title>固定夹 (活动的) - Creo Parametric 5.0</Title>
          <TitleRight>
            <Zoomer />
            <WinCtl>
              <I s={14} v={14}><path d="M2 9h9" stroke="#777" strokeWidth="1.600" /></I>
              <I s={14} v={14}><path d="M4 4V1h9v6h-3" stroke="#666" fill="none" /><rect x="1" y="4" width="9" height="7" fill="none" stroke="#666" /><path d="M1 5h9" stroke="#666" /></I>
              <I s={14} v={14}><path d="M3 3l8 8M11 3l-8 8" stroke="#777" strokeWidth="1.500" /></I>
            </WinCtl>
          </TitleRight>
        </TitleRow>

        <TabRow>
          {tabs.map(([t, w, k]) => <Tab key={t} $w={w} $kind={k}>{t}</Tab>)}
          <TabFill>
            <I s={12} v={12}><path d="M1 9l5-5 5 5H8L6 7 4 9z" fill="#666" /></I>
            <I s={16}><circle cx="9.500" cy="6.500" r="4.800" fill="#fff" stroke="#333" strokeWidth="1.800" /><path d="M6 10l-4.500 4.500" stroke="#333" strokeWidth="2.400" /></I>
            <I s={16}><circle cx="8" cy="8" r="8" fill="#3b3b3b" /><path d="M3 6l5-2 5 2-5 2z" fill="#fff" /><path d="M5 8v3q3 2 6 0V8l-3 1z" fill="#fff" /></I>
            <Caret $c="#777" />
            <I s={16}><circle cx="8" cy="8" r="8" fill="#333" /><text x="8" y="12.500" fontSize="12.500" fontWeight="700" textAnchor="middle" fill="#fff" fontFamily="Liberation Sans">?</text></I>
          </TabFill>
        </TabRow>

        <Ribbon>
          <Group $w={95}>
            <GroupBody>
              <Smalls items={[[ic.analysis, "分析"], [ic.saved, "已保存分析"], [ic.monitor, "性能监视器"]]} />
            </GroupBody>
            <GroupLabel>管理<Caret /></GroupLabel>
          </Group>
          <Group $w={213}>
            <GroupBody>
              <Smalls w={107} items={[[ic.user, "用户定义分析"], [ic.excel, "Excel 分析"], [ic.toolkit, "基于工具包"]]} />
              <Smalls p={0} items={[[ic.mathcad, "Mathcad 分析", false, true], [ic.prime, "Prime 分析", false, true], [ic.external, "外部分析"]]} />
            </GroupBody>
            <GroupLabel>自定义</GroupLabel>
          </Group>
          <Group $w={97}>
            <GroupBody>
              <Smalls items={[[ic.mass, "质量属性", true], [ic.edge, "短边"], [ic.thick, "厚度"]]} />
            </GroupBody>
            <GroupLabel>模型报告<Caret /></GroupLabel>
          </Group>
          <Group $w={53}>
            <GroupBody>
              <Big $w={52}>
                <BigIcon>{bigs.measure}</BigIcon>
                <BigLabel>测量</BigLabel>
                <BigCaret />
              </Big>
            </GroupBody>
            <GroupLabel>测量</GroupLabel>
          </Group>
          <Group $w={185}>
            <GroupBody>
              <Smalls w={98} items={[[ic.geom, "几何报告", true], [ic.draft, "拔模斜度"], [ic.clash, "全局干涉", true]]} />
              <Smalls p={0} items={[[ic.mesh, "网格化曲面"], [ic.dihedral, "二面角"], [ic.curv, "曲率", true]]} />
            </GroupBody>
            <GroupLabel>检查几何<Caret /></GroupLabel>
          </Group>
          <Group $w={362}>
            <GroupBody>
              <Big $w={64}>
                <BigIcon>{bigs.tol}</BigIcon>
                <BigLabel>公差分析</BigLabel>
                <BigCaret />
              </Big>
              <Smalls p={0} w={108} items={[[ic.sens, "敏感度分析"], [ic.feas, "可行性/优化", true], [ic.stat, "统计设计研究"]]} />
              <RibbonSep />
              <Big $w={67}>
                <BigIcon>{bigs.motion}</BigIcon>
                <BigLabel>运动分析</BigLabel>
              </Big>
              <Big $w={44}>
                <BigIcon>{bigs.sim}</BigIcon>
                <BigLabel>Simulate<br />分析</BigLabel>
              </Big>
              <Big $w={79} $m={2}>
                <BigIcon>{bigs.clear}</BigIcon>
                <BigLabel>间隙和漏电<br />距离分析</BigLabel>
              </Big>
            </GroupBody>
            <GroupLabel>设计研究</GroupLabel>
          </Group>
          <Group>
            <GroupBody />
            <GroupLabel />
          </Group>
        </Ribbon>

        <Main>
          <Panel>
            <PTabs>
              <PTab $w={75} $on>
                <I s={14} v={14}><path d="M1 1h4v3H1zM1 5.500h4v3H1zM1 10h4v3H1zM9 5.500h4v3H9zM3 4v1.500M3 8.500V10M5 7h4" fill="none" stroke="#333" /></I>
                <span>模型树</span>
              </PTab>
              <PTab $w={112}>
                <I s={19} v={19}><path d="M1 2h5l1 1h5v3H1z" fill="#e8c67a" stroke="#8a6a2c" /><rect x="3" y="5" width="10" height="8" fill="#f4e0a8" stroke="#a07c34" /><rect x="7" y="8" width="11" height="9" fill="#fbeec8" stroke="#a07c34" /></I>
                <span>文件夹浏览器</span>
              </PTab>
              <PTab $w={76}>
                <I s={18} v={18}><path d="M1 3h6l1 1h9v12H1z" fill="#f4e0a8" stroke="#a07c34" /><rect x="2" y="6" width="14" height="9" fill="#fff" /><path d="M9 8v5M6.500 10.500h5M7 9l4 3M11 9l-4 3" stroke="#1d5f8a" /></I>
                <span>收藏夹</span>
              </PTab>
            </PTabs>
            <PTool>
              <PBold>模型树</PBold>
              <I s={18} v={18}><path d="M1 2h9v3H7v12H4V5H1z" fill="#b98f4a" stroke="#555" /><path d="M14 1v7" stroke="#555" strokeWidth="2" /><rect x="12.500" y="8" width="3" height="9" fill="#b98f4a" stroke="#555" /></I>
              <Caret $m={7} />
              <QBtn $m={8}><I s={18} v={18}><path d="M2 1h10l4 4v12H2z" fill="#f2f2f2" stroke="#888" /><path d="M7 6h7M7 9h7M7 12h7" stroke="#333" /><path d="M4 6h1.500M4 9h1.500M4 12h1.500" stroke="#1d7fb3" /></I></QBtn>
              <Caret $m={7} />
              <QBtn $m={13}><I s={20} v={20}><path d="M1 1h4v4H1zM1 8h4v4H1zM1 15h4v4H1zM8 8h4v4H8zM8 1h4v4H8zM15 1h4v4h-4z" fill="none" stroke="#c9c9c9" /><ellipse cx="15" cy="15" rx="4" ry="2.500" fill="#bbb" /><path d="M11 11l8 8" stroke="#999" /></I></QBtn>
            </PTool>
            <PFilter>
              <I s={16}><path d="M1 2h14L9.500 8v6l-3 1V8z" fill="#f5f5f5" stroke="#888" /></I>
              <SearchBox>×</SearchBox>
              <Caret $m={5} />
              <QBtn $m={10}><I s={12} v={12}><path d="M6 1v10M1 6h10" stroke="#9a9a9a" strokeWidth="2.500" /></I></QBtn>
            </PFilter>
            <Tree>
              <TreeRow>
                <I s={15} v={15}><path d="M1 4l3-3h10v10l-3 3H1z" fill="#f4d48c" stroke="#a07c34" /><rect x="4" y="1" width="10" height="10" fill="#a8dcf0" stroke="#3a8cb0" /></I>
                <span>固定夹.ASM</span>
              </TreeRow>
              <TreeRow $in={9}>
                <Arrow />
                <I s={15} v={15}><path d="M1 4l3-3h10v10l-3 3H1z" fill="#f4d48c" stroke="#a07c34" /><rect x="4" y="1" width="10" height="10" fill="#a8dcf0" stroke="#3a8cb0" /></I>
                <span>JIA.ASM</span>
              </TreeRow>
            </Tree>
          </Panel>
          <Viewport>
            <Model />
            <ViewBar>
              {viewIcons.map((icon, i) => (
                <ViewBtn key={i} $on={i === 10}>
                  {icon}
                  {[4, 5, 6, 9].includes(i) ? <Corner /> : null}
                </ViewBtn>
              ))}
            </ViewBar>
          </Viewport>
        </Main>

        <Status>
          <StatusIcons>
            <TreeToggle>
              <I s={14} v={14}><path d="M1 1h4v3H1zM1 5.500h4v3H1zM1 10h4v3H1zM9 5.500h4v3H9zM3 4v1.500M3 8.500V10M5 7h4" fill="none" stroke="#333" /></I>
            </TreeToggle>
            <I s={16}><circle cx="8" cy="9" r="6.500" fill="#3a9bd0" /><path d="M3 8q4-3 7 0t2 5" stroke="#cfe9f5" fill="none" /><ellipse cx="8" cy="8" rx="8" ry="3.500" transform="rotate(-35 8 8)" fill="none" stroke="#888" /></I>
            <QBtn $m={3}><I s={16}><rect x=".5" y="1" width="15" height="15" rx="1" fill="#e6eff4" stroke="#1d6f9e" /></I></QBtn>
          </StatusIcons>
          <Msgs>
            <Msg><Dot />基准平面将不显示。</Msg>
            <Msg $in={6} $lh={14}><Dot />将显示带边着色的模型</Msg>
          </Msgs>
          <StatRight>
            <VSep $h={24} />
            <VSep $h={24} $m={40} />
            <SBtn $w={41} $m={2}>
              <I s={17} v={17}><path d="M1 15V7l2-5h4v13zM10 15V2h4l2 5v8z" fill="#4a4a4a" /><rect x="7" y="6" width="3" height="4" fill="#8a8a8a" /><path d="M2 9h4M11 9h4" stroke="#999" /></I>
              <Caret $m={2} />
            </SBtn>
            <VSep $m={3} $h={24} />
            <SBtn $w={40} $m={2}>
              <I s={18} v={18}><path d="M1 5l4-4h12v12l-4 4H1z" fill="#fff" stroke="#444" /><rect x="4" y="5" width="9" height="9" fill="#f4d48c" stroke="#a07c34" /><rect x="6" y="4" width="7" height="7" fill="#a8dcf0" stroke="#3a8cb0" /></I>
            </SBtn>
            <Combo>
              <span>几何</span>
              <ComboArrow><Caret $c="#888" /></ComboArrow>
            </Combo>
          </StatRight>
        </Status>

        <Watermark>
          <WmLogo viewBox="0 0 72 60">
            <path d="M4 18Q10 -4 36 8Q55 20 60 38M4 18Q6 30 30 40" fill="none" stroke="#1b3a66" strokeWidth="3" />
            <path d="M42 36Q58 14 64 32Q62 50 45 58" fill="none" stroke="#b0324c" strokeWidth="3" />
            <path d="M12 50Q12 38 26 36Q44 36 50 50" fill="none" stroke="#9fb0c0" strokeWidth="2" />
          </WmLogo>
          <WmTitle>野火论坛</WmTitle>
          <WmUrl>www.proewildfire.cn</WmUrl>
        </Watermark>
      </Page>
    </>
  );
}
